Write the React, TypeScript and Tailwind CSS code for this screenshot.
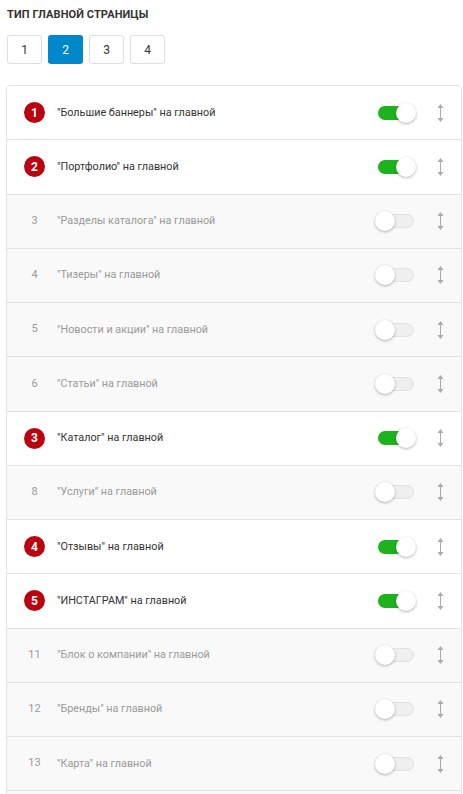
import React from "react";

type Row = { n: number; label: string; on: boolean; badge?: number; empty?: boolean };

const rows: Row[] = [
  { n: 1, label: "\"Большие баннеры\" на главной", on: true, badge: 1 },
  { n: 2, label: "\"Портфолио\" на главной", on: true, badge: 2 },
  { n: 3, label: "\"Разделы каталога\" на главной", on: false },
  { n: 4, label: "\"Тизеры\" на главной", on: false },
  { n: 5, label: "\"Новости и акции\" на главной", on: false },
  { n: 6, label: "\"Статьи\" на главной", on: false },
  { n: 7, label: "\"Каталог\" на главной", on: true, badge: 3 },
  { n: 8, label: "\"Услуги\" на главной", on: false },
  { n: 9, label: "\"Отзывы\" на главной", on: true, badge: 4 },
  { n: 10, label: "\"ИНСТАГРАМ\" на главной", on: true, badge: 5 },
  { n: 11, label: "\"Блок о компании\" на главной", on: false },
  { n: 12, label: "\"Бренды\" на главной", on: false },
  { n: 13, label: "\"Карта\" на главной", on: false },
  { n: 14, label: "", on: false, empty: true },
];

function Arrow() {
  return (
    <svg width="7" height="18" viewBox="0 0 7 18" className="block">
      <polygon points="3.5,0 6.5,4 0.5,4" fill="#ababab" />
      <rect x="3" y="3" width="1" height="12" fill="#ababab" />
      <polygon points="3.5,18 6.5,14 0.5,14" fill="#ababab" />
    </svg>
  );
}

function Toggle({ on }: { on: boolean }) {
  return (
    <div className="relative w-[41px] h-[20px]">
      <div
        className={
          on
            ? "absolute left-[3px] top-[3px] w-[36px] h-[14px] rounded-full bg-[#1db31d]"
            : "absolute left-[3px] top-[3px] w-[36px] h-[14px] rounded-full bg-[#efefef] border border-[#e2e2e2]"
        }
      />
      <div
        className={
          on
            ? "absolute left-[21px] top-0 w-[20px] h-[20px] rounded-full bg-white shadow-[0_1px_3px_rgba(0,0,0,0.3)]"
            : "absolute left-0 top-0 w-[20px] h-[20px] rounded-full bg-white shadow-[0_1px_3px_rgba(0,0,0,0.3)]"
        }
      />
    </div>
  );
}

export default function App() {
  return (
    <div
      className="w-[463px] h-[794px] bg-white overflow-hidden"
      style={{ fontFamily: "Roboto, 'Liberation Sans', sans-serif" }}
    >
      <div className="pl-[7px] pt-[9px] text-[11px] font-bold text-[#333] leading-[12px] tracking-[0.1px]">
        ТИП ГЛАВНОЙ СТРАНИЦЫ
      </div>
      <div className="flex gap-[6px] pl-[7px] mt-[14px]">
        {[1, 2, 3, 4].map((n) => (
          <div
            key={n}
            className={
              n === 2
                ? "w-[35px] h-[29px] rounded-[3px] bg-[#0088cc] text-white flex items-center justify-center text-[12px]"
                : "w-[35px] h-[29px] rounded-[3px] border border-[#dedede] bg-white text-[#333] flex items-center justify-center text-[12px]"
            }
          >
            {n}
          </div>
        ))}
      </div>
      <div className="ml-[6px] mr-[1px] mt-[21px] border border-[#e2e2e2] rounded-[4px] overflow-hidden">
        {rows.map((r) =>
          r.empty ? (
            <div key={r.n} className="bg-[#f9f9f9] h-[54.25px] border-b border-[#e2e2e2]" />
          ) : (
            <div
              key={r.n}
              className={
                (r.on ? "bg-white " : "bg-[#f9f9f9] ") +
                "h-[54.25px] border-b border-[#e2e2e2] flex items-center pl-[17px] pr-[17px]"
              }
            >
              <div className="w-[21px] flex justify-center">
                {r.badge ? (
                  <div className="w-[21px] h-[21px] rounded-full bg-[#bb0310] text-white text-[12px] font-bold flex items-center justify-center">
                    {r.badge}
                  </div>
                ) : (
                  <span className="text-[11px] text-[#9a9a9a]">{r.n}</span>
                )}
              </div>
              <div
                className={
                  "ml-[12px] flex-1 text-[10.8px] " +
                  (r.on ? "text-[#333]" : "text-[#9a9a9a]")
                }
              >
                {r.label}
              </div>
              <Toggle on={r.on} />
              <div className="ml-[21px] w-[7px]">
                <Arrow />
              </div>
            </div>
          )
        )}
      </div>
    </div>
  );
}
